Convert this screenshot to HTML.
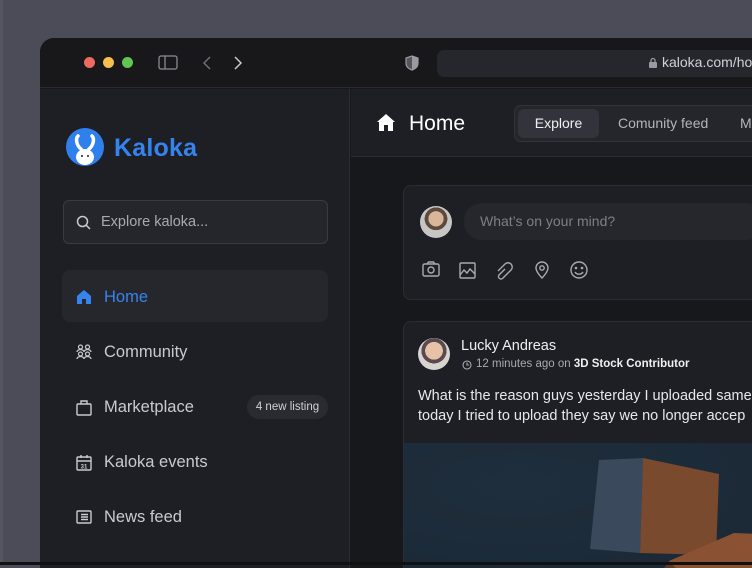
<!DOCTYPE html>
<html><head><meta charset="utf-8"><style>
*{margin:0;padding:0;box-sizing:border-box}
body{width:752px;height:565px;overflow:hidden;background:#4b4c58;font-family:"Liberation Sans",sans-serif;position:relative}
.abs{position:absolute}
.win{left:40px;top:38px;width:720px;height:530px;background:#18181c;border-radius:14px 0 0 0;overflow:hidden}
.top{left:0;top:0;width:720px;height:50px;background:#18181b;border-bottom:1px solid #2a2b31}
.side{left:0;top:51px;width:310px;height:480px;background:#1e1f24;border-right:1px solid #2c2d33}
.main{left:311px;top:51px;width:420px;height:480px;background:#17181c}
.dot{width:11px;height:11px;border-radius:50%;top:19px}
.nav{left:22px;width:266px;height:52px;border-radius:8px;color:#c9cad0;font-size:16.5px;display:flex;align-items:center;padding-left:14px;padding-top:2px}
.nav svg{margin-right:12px}
.card{background:#1e1f24;border:1px solid #2c2d33;border-radius:8px}
</style></head><body>
<div class="abs win">
 <div class="abs top">
  <div class="abs dot" style="left:44px;background:#ec6a5f"></div>
  <div class="abs dot" style="left:63px;background:#f4bf4f"></div>
  <div class="abs dot" style="left:82px;background:#61c554"></div>
  <svg class="abs" style="left:118px;top:17px" width="20" height="15" viewBox="0 0 20 15"><rect x="1" y="1" width="18" height="13" rx="2" fill="none" stroke="#8a8b92" stroke-width="1.3"/><line x1="7" y1="1" x2="7" y2="14" stroke="#8a8b92" stroke-width="1.3"/></svg>
  <svg class="abs" style="left:162px;top:17px" width="10" height="16"><path d="M8 2L2 8l6 6" fill="none" stroke="#6e6f76" stroke-width="1.5"/></svg>
  <svg class="abs" style="left:193px;top:17px" width="10" height="16"><path d="M2 2l6 6-6 6" fill="none" stroke="#c8c9ce" stroke-width="1.5"/></svg>
  <svg class="abs" style="left:365px;top:17px" width="14" height="16" viewBox="0 0 14 16"><path d="M7 1L1 3v5c0 4 3 6 6 7 3-1 6-3 6-7V3z" fill="#55565c" stroke="#9a9ba1" stroke-width="1.2"/><path d="M7 1v14c3-1 6-3 6-7V3z" fill="#9a9ba1"/></svg>
  <div class="abs" style="left:397px;top:12px;width:330px;height:27px;background:#26272c;border-radius:7px"></div>
  <svg class="abs" style="left:608px;top:19px" width="10" height="12"><rect x="1" y="5" width="8" height="6" rx="1" fill="#9a9ba1"/><path d="M3 5V3.5a2 2 0 0 1 4 0V5" fill="none" stroke="#9a9ba1" stroke-width="1.3"/></svg>
  <div class="abs" style="left:622px;top:16px;color:#d0d1d6;font-size:14px">kaloka.com/hom</div>
 </div>
 <div class="abs side">
  <svg class="abs" style="left:26px;top:39px" width="38" height="38" viewBox="0 0 38 38"><circle cx="19" cy="19" r="19" fill="#2f80ed"/><path d="M12 8c-3 3-1 10 3 13M26 8c3 3 1 10-3 13" fill="none" stroke="#fff" stroke-width="3.5" stroke-linecap="round"/><ellipse cx="19" cy="29" rx="9" ry="8" fill="#fff"/><circle cx="16" cy="28" r="1" fill="#1e1f24"/><circle cx="22" cy="28" r="1" fill="#1e1f24"/></svg>
  <div class="abs" style="left:74px;top:45px;color:#3584ee;font-size:25px;font-weight:bold;letter-spacing:.2px">Kaloka</div>
  <div class="abs" style="left:23px;top:111px;width:265px;height:44px;border:1px solid #3a3b42;border-radius:6px;background:#25262b"></div>
  <svg class="abs" style="left:36px;top:126px" width="15" height="15"><circle cx="6.5" cy="6.5" r="5" fill="none" stroke="#c9cad0" stroke-width="1.5"/><path d="M10 10l4 4" stroke="#c9cad0" stroke-width="1.5"/></svg>
  <div class="abs" style="left:61px;top:125px;color:#a9aab0;font-size:14.5px">Explore kaloka...</div>
  <div class="abs nav" style="top:181px;background:#26272d;color:#3584ee"><svg width="16" height="16" viewBox="0 0 16 16"><path d="M8 1L1 7v8h5v-5h4v5h5V7z" fill="#3584ee"/></svg>Home</div>
  <div class="abs nav" style="top:236px"><svg width="16" height="16" viewBox="0 0 16 16" fill="none" stroke="#c9cad0" stroke-width="1.2"><circle cx="4.5" cy="3" r="2"/><circle cx="11.5" cy="3" r="2"/><path d="M1 8a3.5 2.5 0 0 1 7 0M8 8a3.5 2.5 0 0 1 7 0"/><circle cx="4.5" cy="10" r="2"/><circle cx="11.5" cy="10" r="2"/><path d="M1 15a3.5 2.5 0 0 1 7 0M8 15a3.5 2.5 0 0 1 7 0"/></svg>Community</div>
  <div class="abs nav" style="top:291px"><svg width="16" height="17" viewBox="0 0 16 17" fill="none" stroke="#c9cad0" stroke-width="1.4"><rect x="1" y="5" width="14" height="11" rx="1"/><path d="M5 5V2h6v3"/></svg>Marketplace</div>
  <div class="abs" style="left:207px;top:306px;width:81px;height:24px;border-radius:12px;background:#2a2b31;color:#d0d1d6;font-size:11.5px;line-height:24px;text-align:center">4 new listing</div>
  <div class="abs nav" style="top:346px"><svg width="16" height="17" viewBox="0 0 16 17" fill="none" stroke="#c9cad0" stroke-width="1.4"><rect x="1" y="3" width="14" height="13" rx="1"/><path d="M1 7h14M5 1v3M11 1v3"/><text x="8" y="14.5" font-size="6" fill="#c9cad0" stroke="none" text-anchor="middle" font-family="Liberation Sans" font-weight="bold">31</text></svg>Kaloka events</div>
  <div class="abs nav" style="top:401px"><svg width="16" height="14" viewBox="0 0 16 14" fill="none" stroke="#c9cad0" stroke-width="1.4"><rect x="1" y="1" width="14" height="12" rx="1"/><path d="M5 4.5h7M5 7h7M5 9.5h7"/></svg>News feed</div>
 </div>
 <div class="abs main">
  <div class="abs" style="left:0;top:0;width:420px;height:68px;background:#1e1f24;border-bottom:1px solid #2c2d33"></div>
  <svg class="abs" style="left:25px;top:24px" width="20" height="19" viewBox="0 0 20 19"><path d="M10 1L1 9h2v9h5v-6h4v6h5V9h2z" fill="#fff"/></svg>
  <div class="abs" style="left:58px;top:23px;color:#fff;font-size:21px">Home</div>
  <div class="abs" style="left:163px;top:16px;width:270px;height:37px;background:#25262b;border:1px solid #33343a;border-radius:7px"></div>
  <div class="abs" style="left:167px;top:20px;width:81px;height:29px;background:#33343b;border-radius:6px;color:#f0f0f3;font-size:14px;line-height:29px;text-align:center">Explore</div>
  <div class="abs" style="left:267px;top:26px;color:#b4b5bb;font-size:14px">Comunity feed</div>
  <div class="abs" style="left:389px;top:26px;color:#b4b5bb;font-size:14px">M</div>
  <div class="abs card" style="left:52px;top:96px;width:380px;height:115px"></div>
  <div class="abs" style="left:69px;top:117px;width:32px;height:32px;border-radius:50%;background:radial-gradient(circle at 50% 40%,#d9b59a 0 30%,#5c4a3c 31% 45%,#c8c6c4 46%)"></div>
  <div class="abs" style="left:113px;top:114px;width:300px;height:37px;border-radius:18px;background:#26272c;color:#7e7f86;font-size:14px;line-height:37px;padding-left:16px">What’s on your mind?</div>
  <svg class="abs" style="left:71px;top:171px" width="178" height="20" viewBox="0 0 178 20" fill="none" stroke="#a9aab0" stroke-width="1.4">
   <rect x="1" y="4" width="16" height="12" rx="1.5"/><path d="M5 4l1.5-2h5L13 4"/><circle cx="9" cy="10" r="3"/>
   <rect x="38" y="3" width="15" height="15" rx="1"/><path d="M38 15l4-5 3 3 3-4 5 5"/>
   <path d="M83 9l-6 6a2.5 2.5 0 0 0 4 3l8-8a4 4 0 0 0-6-6l-7 7"/>
   <path d="M120 18s-6-6-6-10a6 6 0 0 1 12 0c0 4-6 10-6 10z"/><circle cx="120" cy="8" r="2.2"/>
   <circle cx="157" cy="10" r="8"/><circle cx="154" cy="8" r=".6"/><circle cx="160" cy="8" r=".6"/><path d="M153 12a4.5 4 0 0 0 8 0"/>
  </svg>
  <div class="abs card" style="left:52px;top:232px;width:380px;height:260px;overflow:hidden">
   <div class="abs" style="left:0;top:121px;width:380px;height:140px;background:radial-gradient(ellipse at 30% 30%,#1f2e3c,#1a2836)"></div>
   <svg class="abs" style="left:0;top:121px" width="380" height="140"><polygon points="195,17 239,15 236,110 186,106" fill="#3a4a5c"/><polygon points="239,15 315,31 312,112 236,110" fill="#7a4a2e"/><polygon points="265,118 330,90 380,92 380,140 285,140" fill="#8a5232"/><polygon points="265,118 285,140 250,140" fill="#5b3a2a"/></svg>
  </div>
  <div class="abs" style="left:67px;top:249px;width:32px;height:32px;border-radius:50%;background:radial-gradient(circle at 50% 40%,#e8c2a6 0 35%,#5a4a50 36% 50%,#d8d4d0 51%)"></div>
  <div class="abs" style="left:110px;top:249px;color:#f0f0f3;font-size:14.5px">Lucky Andreas</div>
  <svg class="abs" style="left:111px;top:271px" width="10" height="10"><circle cx="5" cy="5" r="4" fill="none" stroke="#a9aab0" stroke-width="1.1"/><path d="M5 2.5V5h2" fill="none" stroke="#a9aab0" stroke-width="1.1"/></svg>
  <div class="abs" style="left:125px;top:269px;color:#a9aab0;font-size:11.5px">12 minutes ago on <b style="color:#f0f0f3">3D Stock Contributor</b></div>
  <div class="abs" style="left:67px;top:298px;color:#e8e8ec;font-size:14.5px;line-height:19.5px;white-space:nowrap">What is the reason guys yesterday I uploaded same<br>today I tried to upload they say we no longer accep</div>
 </div>
</div>
<div class="abs" style="left:0;top:0;width:3px;height:565px;background:#55565f"></div>
<div class="abs" style="left:0;top:562px;width:752px;height:3px;background:#111"></div>
</body></html>
